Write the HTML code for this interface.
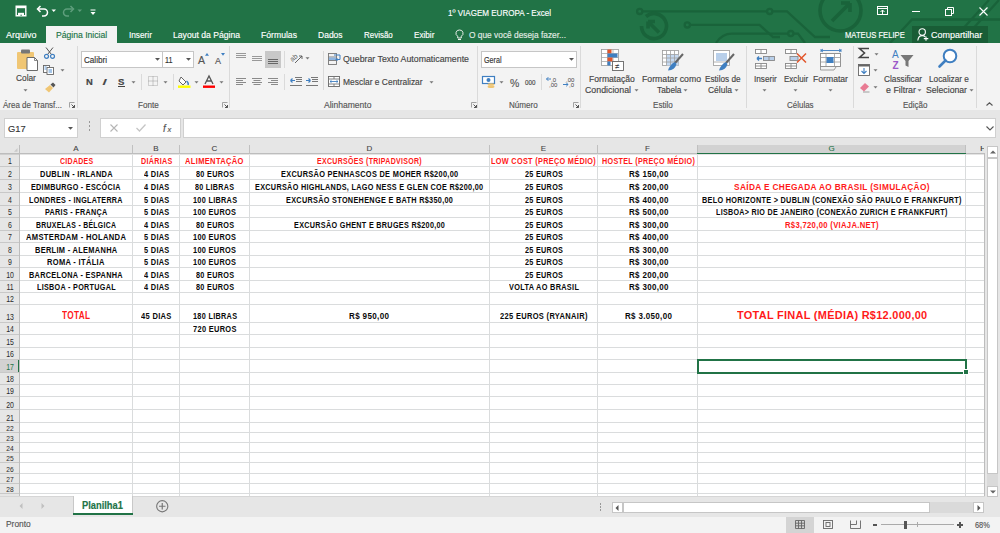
<!DOCTYPE html><html><head><meta charset="utf-8"><style>
*{margin:0;padding:0;box-sizing:border-box}
html,body{width:1000px;height:533px;overflow:hidden;background:#e6e6e6;font-family:"Liberation Sans",sans-serif;position:relative}
.a{position:absolute}
svg.a{overflow:visible}
.tx{position:absolute;white-space:nowrap;line-height:1;-webkit-text-stroke:0.15px currentColor}
</style></head><body><div class="a" style="left:0px;top:0px;width:1000px;height:43px;background:#217346;"></div>
<svg class="a" style="left:0px;top:0px;" width="1000" height="43" viewBox="0 0 1000 43">
<g fill="none" stroke="#19633a" stroke-width="2.3">
<circle cx="639.7" cy="11.4" r="2.6"/>
<path d="M642.3 11.4 H767.1"/>
<circle cx="769.7" cy="11.4" r="2.6"/>
<path d="M772.3 11.4 H787 L815 37 H830"/>
<circle cx="687.3" cy="24.9" r="2.6"/>
<path d="M689.9 24.9 H759.5 L773 37 H780"/>
<path d="M716 43 Q722 33.6 732 33.6 H788.2"/>
<circle cx="790.8" cy="33.6" r="2.6"/>
<path d="M793.4 33.6 H798 L805 43"/>
<path d="M890 43 L912 19.5 H1000"/>
<path d="M950 43 L989 0"/>
<path d="M960 43 L999 0"/>
</g>
<g fill="none" stroke="#19633a" stroke-width="3.6">
<path d="M646 16.5 A12.5 12.5 0 1 1 641.5 26"/>
<path d="M659 32.5 L648 21.5 M648 21.5 H655 M648 21.5 V28.5"/>
<path d="M826 -4 A20.5 20.5 0 1 0 855 -4"/>
<path d="M832 21 L850 3 M850 3 H841 M850 3 V12"/>
</g></svg>
<svg class="a" style="left:15px;top:5px;" width="12" height="12" viewBox="0 0 12 12"><path d="M1.2 1.2 H10.8 V10.8 H1.2 Z" fill="none" stroke="#ffffff" stroke-width="1.4"/><rect x="1" y="1" width="10" height="2.2" fill="#ffffff"/><path d="M3 11 V7.8 H9 V11" fill="#ffffff"/><rect x="5.6" y="9.6" width="1" height="1.4" fill="#217346"/></svg>
<svg class="a" style="left:36px;top:5px;" width="13" height="12" viewBox="0 0 13 12"><path d="M2 4 H8 A3.5 3.5 0 0 1 8 11 H6" fill="none" stroke="#ffffff" stroke-width="1.5"/><path d="M4.5 1 L1.5 4 L4.5 7" fill="none" stroke="#ffffff" stroke-width="1.5"/></svg>
<svg class="a" style="left:51px;top:9px;" width="6" height="4" viewBox="0 0 6 4"><path d="M0.5 0.5 H5 L2.75 3 Z" fill="#ffffff"/></svg>
<svg class="a" style="left:62px;top:5px;" width="13" height="12" viewBox="0 0 13 12"><path d="M11 4 H5 A3.5 3.5 0 0 0 5 11 H7" fill="none" stroke="#5e9e7c" stroke-width="1.5"/><path d="M8.5 1 L11.5 4 L8.5 7" fill="none" stroke="#5e9e7c" stroke-width="1.5"/></svg>
<svg class="a" style="left:77px;top:9px;" width="6" height="4" viewBox="0 0 6 4"><path d="M0.5 0.5 H5 L2.75 3 Z" fill="#5e9e7c"/></svg>
<svg class="a" style="left:90px;top:9px;" width="6" height="7" viewBox="0 0 6 7"><rect x="0.5" y="0.5" width="5" height="1" fill="#ffffff"/><path d="M0.5 3 H5.5 L3 6 Z" fill="#ffffff"/></svg>
<div id="t1" class="tx" style="left:447.5px;top:8.51px;font-size:9.2px;color:#ffffff;font-weight:normal;transform:scaleX(0.8761);transform-origin:0 0;">1º VIAGEM EUROPA - Excel</div>
<svg class="a" style="left:877px;top:6px;" width="11" height="10" viewBox="0 0 11 10"><rect x="0.5" y="0.5" width="10" height="8" fill="none" stroke="#ffffff" stroke-width="1"/><path d="M0.5 2.5 H10.5" stroke="#ffffff"/><path d="M5.5 8 V4 M3.5 6 L5.5 4 L7.5 6" fill="none" stroke="#ffffff" stroke-width="1"/></svg>
<div class="a" style="left:912px;top:11px;width:8px;height:1px;background:#ffffff;"></div>
<svg class="a" style="left:945px;top:7px;" width="9" height="9" viewBox="0 0 9 9"><rect x="0.5" y="2.5" width="6" height="6" fill="none" stroke="#ffffff"/><path d="M2.5 2.5 V0.5 H8.5 V6.5 H6.5" fill="none" stroke="#ffffff"/></svg>
<svg class="a" style="left:979px;top:7px;" width="9" height="9" viewBox="0 0 9 9"><path d="M0.5 0.5 L8.5 8.5 M8.5 0.5 L0.5 8.5" stroke="#ffffff" stroke-width="1.1"/></svg>
<div class="a" style="left:46px;top:26px;width:71px;height:17px;background:#f3f3f3;"></div>
<div id="t2" class="tx" style="left:6.0px;top:30.68px;font-size:9px;color:#ffffff;font-weight:normal;transform:scaleX(0.9995);transform-origin:0 0;">Arquivo</div>
<div id="t3" class="tx" style="left:55.7px;top:30.68px;font-size:9px;color:#217346;font-weight:normal;transform:scaleX(0.9562);transform-origin:0 0;">Página Inicial</div>
<div id="t4" class="tx" style="left:128.8px;top:30.68px;font-size:9px;color:#ffffff;font-weight:normal;transform:scaleX(0.9154);transform-origin:0 0;">Inserir</div>
<div id="t5" class="tx" style="left:172.5px;top:30.68px;font-size:9px;color:#ffffff;font-weight:normal;transform:scaleX(0.9563);transform-origin:0 0;">Layout da Página</div>
<div id="t6" class="tx" style="left:260.5px;top:30.68px;font-size:9px;color:#ffffff;font-weight:normal;transform:scaleX(0.9596);transform-origin:0 0;">Fórmulas</div>
<div id="t7" class="tx" style="left:317.6px;top:30.68px;font-size:9px;color:#ffffff;font-weight:normal;transform:scaleX(0.9456);transform-origin:0 0;">Dados</div>
<div id="t8" class="tx" style="left:363.8px;top:30.68px;font-size:9px;color:#ffffff;font-weight:normal;transform:scaleX(0.8857);transform-origin:0 0;">Revisão</div>
<div id="t9" class="tx" style="left:414.3px;top:30.68px;font-size:9px;color:#ffffff;font-weight:normal;transform:scaleX(0.9060);transform-origin:0 0;">Exibir</div>
<svg class="a" style="left:455px;top:29px;" width="9" height="12" viewBox="0 0 9 12"><path d="M4.5 1 A3.3 3.3 0 0 1 6.3 7.2 V9 H2.7 V7.2 A3.3 3.3 0 0 1 4.5 1 Z" fill="none" stroke="#e8f0ea" stroke-width="1"/><path d="M3 10.5 H6" stroke="#e8f0ea"/></svg>
<div id="t10" class="tx" style="left:468.5px;top:30.68px;font-size:9px;color:#e1ece5;font-weight:normal;transform:scaleX(0.9275);transform-origin:0 0;">O que você deseja fazer...</div>
<div id="t11" class="tx" style="left:844.8px;top:30.68px;font-size:9px;color:#ffffff;font-weight:normal;transform:scaleX(0.8499);transform-origin:0 0;">MATEUS FELIPE</div>
<div class="a" style="left:912px;top:26px;width:76px;height:17px;background:#195d36;"></div>
<svg class="a" style="left:917px;top:28px;" width="12" height="13" viewBox="0 0 12 13"><circle cx="5.2" cy="4" r="3.2" fill="none" stroke="#ffffff" stroke-width="1.1"/><path d="M0.8 12.5 C1.2 9.2 3 7.6 5.2 7.6 C6.5 7.6 7.6 8 8.3 8.8" fill="none" stroke="#ffffff" stroke-width="1.1"/><path d="M9 8.5 V12.8 M6.8 10.6 H11.3" stroke="#ffffff" stroke-width="1.1"/></svg>
<div id="t12" class="tx" style="left:931.0px;top:30.68px;font-size:9px;color:#ffffff;font-weight:normal;transform:scaleX(0.9955);transform-origin:0 0;">Compartilhar</div>
<div class="a" style="left:0px;top:43px;width:1000px;height:67px;background:#f3f3f3;"></div>
<div class="a" style="left:77px;top:46px;width:1px;height:62px;background:#dadada;"></div>
<div class="a" style="left:229px;top:46px;width:1px;height:62px;background:#dadada;"></div>
<div class="a" style="left:477px;top:46px;width:1px;height:62px;background:#dadada;"></div>
<div class="a" style="left:580px;top:46px;width:1px;height:62px;background:#dadada;"></div>
<div class="a" style="left:746px;top:46px;width:1px;height:62px;background:#dadada;"></div>
<div class="a" style="left:853px;top:46px;width:1px;height:62px;background:#dadada;"></div>
<div class="a" style="left:976px;top:46px;width:1px;height:62px;background:#dadada;"></div>
<svg class="a" style="left:16px;top:49px;" width="22" height="22" viewBox="0 0 22 22"><rect x="1" y="3" width="17" height="17" rx="1" fill="#f0c674"/><rect x="5" y="0.5" width="9" height="4" rx="1" fill="#777"/>
<path d="M11 8.5 H18.5 L21.5 11.5 V21.5 H11 Z" fill="#fff" stroke="#6b6b6b" stroke-width="1"/><path d="M18.5 8.5 V11.5 H21.5" fill="none" stroke="#6b6b6b" stroke-width="0.8"/></svg>
<div id="t13" class="tx" style="left:15.8px;top:74.35px;font-size:8.8px;color:#444;font-weight:normal;transform:scaleX(0.9462);transform-origin:0 0;">Colar</div>
<svg class="a" style="left:23px;top:89px;" width="5" height="3" viewBox="0 0 5 3"><path d="M0.5 0.3 H4.5 L2.5 2.6 Z" fill="#777"/></svg>
<svg class="a" style="left:44px;top:47px;" width="11" height="12" viewBox="0 0 11 12"><path d="M2 0.5 L7.5 7.5 M9 0.5 L3.5 7.5" stroke="#555" stroke-width="1"/><circle cx="2.5" cy="9.3" r="2" fill="none" stroke="#3f7fc1" stroke-width="1.2"/><circle cx="8.5" cy="9.3" r="2" fill="none" stroke="#3f7fc1" stroke-width="1.2"/></svg>
<svg class="a" style="left:43px;top:65px;" width="11" height="10" viewBox="0 0 11 10"><rect x="0.5" y="0.5" width="6" height="7" fill="#fff" stroke="#666" stroke-width="0.9"/><rect x="4" y="2.5" width="6.5" height="7" fill="#fff" stroke="#666" stroke-width="0.9"/><path d="M5.5 5 H9 M5.5 7 H9" stroke="#4a8bd0" stroke-width="1"/><path d="M1.5 2 h2 M1.5 4 h2" stroke="#4a8bd0" stroke-width="0.9"/></svg>
<svg class="a" style="left:60px;top:69px;" width="5" height="3" viewBox="0 0 5 3"><path d="M0.5 0.3 H4.5 L2.5 2.6 Z" fill="#777"/></svg>
<svg class="a" style="left:44px;top:82px;" width="12" height="11" viewBox="0 0 12 11"><path d="M1 7 L6 3 L9 6 L5 10.5 Z" fill="#f0c674"/><path d="M6.5 2.5 L9 0.5 L11.5 3 L9.5 5.5 Z" fill="#555"/></svg>
<div id="t14" class="tx" style="left:2.9px;top:100.92px;font-size:8.6px;color:#555;font-weight:normal;transform:scaleX(0.9271);transform-origin:0 0;">Área de Transf...</div>
<svg class="a" style="left:69px;top:102px;" width="6" height="6" viewBox="0 0 6 6"><path d="M0.5 5.5 V0.5 H5.5" fill="none" stroke="#999" stroke-width="0.9"/><path d="M2.5 2.5 L5.5 5.5 M3 5.5 H5.5 V3" fill="none" stroke="#555" stroke-width="1"/></svg>
<div class="a" style="left:81px;top:51px;width:82px;height:17px;background:#fff;border:1px solid #c6c6c6"></div>
<div class="a" style="left:162px;top:51px;width:32px;height:17px;background:#fff;border:1px solid #c6c6c6"></div>
<div id="t15" class="tx" style="left:83.7px;top:55.85px;font-size:8.8px;color:#333;font-weight:normal;transform:scaleX(0.9223);transform-origin:0 0;">Calibri</div>
<div id="t16" class="tx" style="left:164.8px;top:55.85px;font-size:8.8px;color:#333;font-weight:normal;transform:scaleX(0.8205);transform-origin:0 0;">11</div>
<svg class="a" style="left:155px;top:58px;" width="5" height="3" viewBox="0 0 5 3"><path d="M0 0 H5 L2.5 2.8 Z" fill="#555"/></svg>
<svg class="a" style="left:186px;top:58px;" width="5" height="3" viewBox="0 0 5 3"><path d="M0 0 H5 L2.5 2.8 Z" fill="#555"/></svg>
<div id="t17" class="tx" style="left:198.4px;top:55.83px;font-size:10px;color:#555;font-weight:normal;transform:scaleX(1.0492);transform-origin:0 0;">A</div>
<svg class="a" style="left:205px;top:53px;" width="4" height="3" viewBox="0 0 4 3"><path d="M0 2.8 H4 L2 0 Z" fill="#3f7fc1"/></svg>
<div id="t18" class="tx" style="left:215.0px;top:57.10px;font-size:8.5px;color:#555;font-weight:normal;transform:scaleX(1.0579);transform-origin:0 0;">A</div>
<svg class="a" style="left:220.5px;top:53px;" width="4" height="3" viewBox="0 0 4 3"><path d="M0 0 H4 L2 2.8 Z" fill="#3f7fc1"/></svg>
<div id="t19" class="tx" style="left:86.0px;top:77.15px;font-size:9.5px;color:#444;font-weight:bold;transform:scaleX(0.9891);transform-origin:0 0;">N</div>
<div id="t20" class="tx" style="left:102.0px;top:77.15px;font-size:9.5px;color:#444;font-weight:normal;transform:scaleX(1.8935);transform-origin:0 0;font-style:italic;font-family:"Liberation Serif",serif;">I</div>
<div id="t21" class="tx" style="left:118.4px;top:77.15px;font-size:9.5px;color:#444;font-weight:bold;transform:scaleX(1.0089);transform-origin:0 0;">S</div>
<div class="a" style="left:118px;top:86px;width:7px;height:1px;background:#444;"></div>
<svg class="a" style="left:131px;top:81px;" width="5" height="3" viewBox="0 0 5 3"><path d="M0.5 0.3 H4.5 L2.5 2.6 Z" fill="#777"/></svg>
<svg class="a" style="left:163px;top:81px;" width="5" height="3" viewBox="0 0 5 3"><path d="M0.5 0.3 H4.5 L2.5 2.6 Z" fill="#777"/></svg>
<svg class="a" style="left:194px;top:81px;" width="5" height="3" viewBox="0 0 5 3"><path d="M0.5 0.3 H4.5 L2.5 2.6 Z" fill="#777"/></svg>
<svg class="a" style="left:219px;top:81px;" width="5" height="3" viewBox="0 0 5 3"><path d="M0.5 0.3 H4.5 L2.5 2.6 Z" fill="#777"/></svg>
<div class="a" style="left:141px;top:74px;width:1px;height:16px;background:#dadada;"></div>
<div class="a" style="left:173px;top:74px;width:1px;height:16px;background:#dadada;"></div>
<svg class="a" style="left:148px;top:76px;" width="10" height="10" viewBox="0 0 10 10"><rect x="0.5" y="0.5" width="9" height="9" fill="none" stroke="#aaa" stroke-width="1" stroke-dasharray="1 1"/><path d="M5 0.5 V9.5 M0.5 5 H9.5" stroke="#999" stroke-width="1" stroke-dasharray="1 1"/></svg>
<svg class="a" style="left:178px;top:75px;" width="13" height="13" viewBox="0 0 13 13"><path d="M3 2 L8 7 L5 10 L1 6 Z" fill="#fff" stroke="#555" stroke-width="0.9"/><path d="M8.5 6 Q11 8 10 10" fill="none" stroke="#3f7fc1" stroke-width="1.5"/><rect x="0" y="10.5" width="12.5" height="2.4" fill="#ffff00"/></svg>
<svg class="a" style="left:203px;top:75px;" width="12" height="13" viewBox="0 0 12 13"><path d="M2 9 L6 1 L10 9 M3.6 6 H8.4" fill="none" stroke="#555" stroke-width="1.3"/><rect x="0" y="10.5" width="12" height="2.4" fill="#ff0000"/></svg>
<div id="t22" class="tx" style="left:137.6px;top:100.92px;font-size:8.6px;color:#555;font-weight:normal;transform:scaleX(0.9461);transform-origin:0 0;">Fonte</div>
<svg class="a" style="left:222px;top:102px;" width="6" height="6" viewBox="0 0 6 6"><path d="M0.5 5.5 V0.5 H5.5" fill="none" stroke="#999" stroke-width="0.9"/><path d="M2.5 2.5 L5.5 5.5 M3 5.5 H5.5 V3" fill="none" stroke="#555" stroke-width="1"/></svg>
<svg class="a" style="left:236px;top:53px;" width="10" height="6" viewBox="0 0 10 6"><path d="M0 0.5 H10 M0 2.5 H10 M0 4.5 H10" stroke="#999" stroke-width="1"/></svg>
<svg class="a" style="left:252px;top:56px;" width="10" height="6" viewBox="0 0 10 6"><path d="M0 0.5 H10 M0 2.5 H10 M0 4.5 H10" stroke="#999" stroke-width="1"/></svg>
<div class="a" style="left:265px;top:51px;width:16px;height:17px;background:#c8c8c8;"></div>
<svg class="a" style="left:268px;top:59px;" width="10" height="6" viewBox="0 0 10 6"><path d="M0 0.5 H10 M0 2.5 H10 M0 4.5 H10" stroke="#666" stroke-width="1"/></svg>
<div class="a" style="left:284px;top:51px;width:1px;height:17px;background:#dadada;"></div>
<svg class="a" style="left:290px;top:53px;" width="13" height="11" viewBox="0 0 13 11"><text x="0" y="7" font-size="7" font-family="Liberation Sans" fill="#555" transform="rotate(-40 4 5)">ab</text><path d="M5 10 L12 3 M12 3 h-3 M12 3 v3" fill="none" stroke="#555" stroke-width="0.9"/></svg>
<svg class="a" style="left:305px;top:57px;" width="5" height="3" viewBox="0 0 5 3"><path d="M0.5 0.3 H4.5 L2.5 2.6 Z" fill="#777"/></svg>
<svg class="a" style="left:236px;top:78px;" width="10" height="8" viewBox="0 0 10 8"><path d="M0 0.5 H10 M0 2.5 H7 M0 4.5 H10 M0 6.5 H7" stroke="#8a8a8a" stroke-width="1"/></svg>
<svg class="a" style="left:252px;top:78px;" width="10" height="8" viewBox="0 0 10 8"><path d="M0 0.5 H10 M1.5 2.5 H8.5 M0 4.5 H10 M1.5 6.5 H8.5" stroke="#8a8a8a" stroke-width="1"/></svg>
<svg class="a" style="left:268px;top:78px;" width="10" height="8" viewBox="0 0 10 8"><path d="M0 0.5 H10 M3 2.5 H10 M0 4.5 H10 M3 6.5 H10" stroke="#8a8a8a" stroke-width="1"/></svg>
<div class="a" style="left:284px;top:74px;width:1px;height:16px;background:#dadada;"></div>
<svg class="a" style="left:290px;top:77px;" width="12" height="10" viewBox="0 0 12 10"><path d="M5 0.5 H12 M6 2.5 H12 M6 4.5 H12 M0 8.5 H12" stroke="#777" stroke-width="1"/><path d="M0.5 3.5 H5 M0.5 3.5 L2.5 1.5 M0.5 3.5 L2.5 5.5" fill="none" stroke="#3f7fc1" stroke-width="1.2"/></svg>
<svg class="a" style="left:306px;top:77px;" width="12" height="10" viewBox="0 0 12 10"><path d="M5 0.5 H12 M6 2.5 H12 M6 4.5 H12 M0 8.5 H12" stroke="#777" stroke-width="1"/><path d="M0 3.5 H4.5 M4.5 3.5 L2.5 1.5 M4.5 3.5 L2.5 5.5" fill="none" stroke="#3f7fc1" stroke-width="1.2"/></svg>
<div class="a" style="left:323px;top:51px;width:1px;height:39px;background:#dadada;"></div>
<svg class="a" style="left:328px;top:53px;" width="13" height="12" viewBox="0 0 13 12"><rect x="0.5" y="0.5" width="8" height="11" fill="none" stroke="#777" stroke-width="0.9"/><path d="M0.5 4 H8.5 M0.5 7.5 H8.5" stroke="#777" stroke-width="0.9"/><rect x="1" y="4.5" width="7" height="2.5" fill="#8fb5e0"/><path d="M6 2 H12 V6.5 H8 M8 6.5 L9.5 5 M8 6.5 L9.5 8" fill="none" stroke="#3f7fc1" stroke-width="1"/></svg>
<div id="t23" class="tx" style="left:342.8px;top:55.02px;font-size:9.3px;color:#444;font-weight:normal;transform:scaleX(0.9461);transform-origin:0 0;">Quebrar Texto Automaticamente</div>
<svg class="a" style="left:328px;top:76px;" width="12" height="11" viewBox="0 0 12 11"><rect x="0.5" y="0.5" width="11" height="10" fill="#fff" stroke="#666" stroke-width="0.9"/><path d="M0.5 3 H11.5 M0.5 8 H11.5 M6 0.5 V3 M6 8 V10.5" stroke="#777" stroke-width="0.9"/><path d="M2 5.5 H10 M2 5.5 L3.5 4.3 M2 5.5 L3.5 6.7 M10 5.5 L8.5 4.3 M10 5.5 L8.5 6.7" fill="none" stroke="#3f7fc1" stroke-width="0.9"/></svg>
<div id="t24" class="tx" style="left:342.8px;top:77.72px;font-size:9.3px;color:#444;font-weight:normal;transform:scaleX(0.9062);transform-origin:0 0;">Mesclar e Centralizar</div>
<svg class="a" style="left:429px;top:81px;" width="5" height="3" viewBox="0 0 5 3"><path d="M0.5 0.3 H4.5 L2.5 2.6 Z" fill="#777"/></svg>
<div id="t25" class="tx" style="left:323.9px;top:100.92px;font-size:8.6px;color:#555;font-weight:normal;transform:scaleX(0.9920);transform-origin:0 0;">Alinhamento</div>
<svg class="a" style="left:471px;top:102px;" width="6" height="6" viewBox="0 0 6 6"><path d="M0.5 5.5 V0.5 H5.5" fill="none" stroke="#999" stroke-width="0.9"/><path d="M2.5 2.5 L5.5 5.5 M3 5.5 H5.5 V3" fill="none" stroke="#555" stroke-width="1"/></svg>
<div class="a" style="left:481px;top:51px;width:96px;height:17px;background:#fff;border:1px solid #c6c6c6"></div>
<div id="t26" class="tx" style="left:483.7px;top:55.85px;font-size:8.8px;color:#333;font-weight:normal;transform:scaleX(0.8134);transform-origin:0 0;">Geral</div>
<svg class="a" style="left:569px;top:58px;" width="5" height="3" viewBox="0 0 5 3"><path d="M0 0 H5 L2.5 2.8 Z" fill="#555"/></svg>
<svg class="a" style="left:482px;top:76px;" width="14" height="12" viewBox="0 0 14 12"><rect x="0.5" y="0.5" width="12" height="7" fill="#fff" stroke="#3f7fc1" stroke-width="1.2"/><circle cx="6.5" cy="4" r="2" fill="#3f7fc1"/><ellipse cx="9" cy="8.5" rx="3.5" ry="1.3" fill="#f0c674"/><ellipse cx="9" cy="10.8" rx="3.5" ry="1.3" fill="#f0c674"/></svg>
<svg class="a" style="left:499px;top:81px;" width="5" height="3" viewBox="0 0 5 3"><path d="M0.5 0.3 H4.5 L2.5 2.6 Z" fill="#777"/></svg>
<div id="t27" class="tx" style="left:509.6px;top:77.68px;font-size:11px;color:#555;font-weight:normal;transform:scaleX(0.9508);transform-origin:0 0;">%</div>
<div id="t28" class="tx" style="left:524.8px;top:79.40px;font-size:7.2px;color:#444;font-weight:normal;transform:scaleX(0.8667);transform-origin:0 0;">000</div>
<div class="a" style="left:541px;top:74px;width:1px;height:16px;background:#dadada;"></div>
<svg class="a" style="left:546px;top:76px;" width="12" height="12" viewBox="0 0 12 12"><text x="5" y="5.5" font-size="6" font-family="Liberation Sans" fill="#444">,0</text><text x="3" y="11" font-size="6" font-family="Liberation Sans" fill="#444">,00</text><path d="M0.5 3 H5 M0.5 3 L2.3 1.2 M0.5 3 L2.3 4.8" fill="none" stroke="#3f7fc1" stroke-width="1"/></svg>
<svg class="a" style="left:563px;top:76px;" width="12" height="12" viewBox="0 0 12 12"><text x="3" y="5.5" font-size="6" font-family="Liberation Sans" fill="#444">,00</text><text x="6" y="11" font-size="6" font-family="Liberation Sans" fill="#444">,0</text><path d="M0 8.5 H5 M5 8.5 L3.2 6.7 M5 8.5 L3.2 10.3" fill="none" stroke="#3f7fc1" stroke-width="1"/></svg>
<div id="t29" class="tx" style="left:508.8px;top:100.92px;font-size:8.6px;color:#555;font-weight:normal;transform:scaleX(0.9418);transform-origin:0 0;">Número</div>
<svg class="a" style="left:572.5px;top:102px;" width="6" height="6" viewBox="0 0 6 6"><path d="M0.5 5.5 V0.5 H5.5" fill="none" stroke="#999" stroke-width="0.9"/><path d="M2.5 2.5 L5.5 5.5 M3 5.5 H5.5 V3" fill="none" stroke="#555" stroke-width="1"/></svg>
<svg class="a" style="left:601px;top:49px;" width="23" height="22" viewBox="0 0 23 22"><g stroke="#999" stroke-width="0.8" fill="#fff"><rect x="0.5" y="0.5" width="17" height="16"/></g>
<path d="M6.5 0.5 V16.5 M12 0.5 V16.5 M0.5 4.5 H17.5 M0.5 8.5 H17.5 M0.5 12.5 H17.5" stroke="#aaa" stroke-width="0.8"/>
<rect x="6.5" y="0.5" width="4" height="4" fill="#e2562b"/><rect x="6.5" y="4.5" width="10" height="4" fill="#3f7fc1"/><rect x="6.5" y="8.5" width="5" height="4" fill="#e2562b"/><rect x="6.5" y="12.5" width="3" height="4" fill="#3f7fc1"/>
<rect x="11.5" y="12.5" width="11" height="9" fill="#fff" stroke="#666" stroke-width="0.9"/><text x="14" y="20" font-size="8" font-family="Liberation Sans" fill="#333">≠</text></svg>
<div id="t30" class="tx" style="left:588.6px;top:74.85px;font-size:8.8px;color:#444;font-weight:normal;transform:scaleX(0.9758);transform-origin:0 0;">Formatação</div>
<div id="t31" class="tx" style="left:585.4px;top:86.15px;font-size:8.8px;color:#444;font-weight:normal;transform:scaleX(1.0003);transform-origin:0 0;">Condicional</div>
<svg class="a" style="left:634px;top:89px;" width="5" height="3" viewBox="0 0 5 3"><path d="M0.5 0.3 H4.5 L2.5 2.6 Z" fill="#777"/></svg>
<svg class="a" style="left:662px;top:50px;" width="22" height="21" viewBox="0 0 22 21"><rect x="0.5" y="0.5" width="16" height="15" fill="#fff" stroke="#999" stroke-width="0.8"/>
<rect x="4.5" y="4.5" width="12" height="11" fill="#c5d9f1"/>
<path d="M4.5 0.5 V15.5 M8.5 0.5 V15.5 M12.5 0.5 V15.5 M0.5 4.5 H16.5 M0.5 8 H16.5 M0.5 12 H16.5" stroke="#a0a0a0" stroke-width="0.8"/>
<path d="M21 4 L13 13" stroke="#666" stroke-width="2"/><path d="M13 12 Q8 14 6 20.5 Q13 20 14.5 14 Z" fill="#3f7fc1"/></svg>
<div id="t32" class="tx" style="left:641.6px;top:74.85px;font-size:8.8px;color:#444;font-weight:normal;transform:scaleX(0.9893);transform-origin:0 0;">Formatar como</div>
<div id="t33" class="tx" style="left:656.5px;top:86.15px;font-size:8.8px;color:#444;font-weight:normal;transform:scaleX(0.9446);transform-origin:0 0;">Tabela</div>
<svg class="a" style="left:683px;top:89px;" width="5" height="3" viewBox="0 0 5 3"><path d="M0.5 0.3 H4.5 L2.5 2.6 Z" fill="#777"/></svg>
<svg class="a" style="left:713px;top:50px;" width="22" height="21" viewBox="0 0 22 21"><rect x="0.5" y="0.5" width="16" height="15" fill="#fff" stroke="#999" stroke-width="0.8"/>
<rect x="3" y="3" width="11" height="8" fill="#b8cfea"/><path d="M0.5 12 H16.5" stroke="#a0a0a0" stroke-width="0.8"/>
<path d="M21 4 L13 13" stroke="#666" stroke-width="2"/><path d="M13 12 Q8 14 6 20.5 Q13 20 14.5 14 Z" fill="#3f7fc1"/></svg>
<div id="t34" class="tx" style="left:705.0px;top:74.85px;font-size:8.8px;color:#444;font-weight:normal;transform:scaleX(0.9308);transform-origin:0 0;">Estilos de</div>
<div id="t35" class="tx" style="left:708.2px;top:86.15px;font-size:8.8px;color:#444;font-weight:normal;transform:scaleX(0.9618);transform-origin:0 0;">Célula</div>
<svg class="a" style="left:734px;top:89px;" width="5" height="3" viewBox="0 0 5 3"><path d="M0.5 0.3 H4.5 L2.5 2.6 Z" fill="#777"/></svg>
<div id="t36" class="tx" style="left:653.4px;top:100.92px;font-size:8.6px;color:#555;font-weight:normal;transform:scaleX(0.9422);transform-origin:0 0;">Estilo</div>
<svg class="a" style="left:755px;top:49px;" width="20" height="20" viewBox="0 0 20 20"><g fill="#fff" stroke="#888" stroke-width="0.9"><rect x="0.5" y="0.5" width="11" height="4"/><path d="M6 0.5 V4.5"/><rect x="0.5" y="14.5" width="11" height="5"/><path d="M6 14.5 V19.5 M0.5 17 H11.5"/></g>
<rect x="8.5" y="7.5" width="11" height="4" fill="#b8cfea" stroke="#888" stroke-width="0.9"/><path d="M14 7.5 V11.5" stroke="#888" stroke-width="0.9"/>
<path d="M2 9.5 H7 M2 9.5 L4 7.5 M2 9.5 L4 11.5" fill="none" stroke="#3f7fc1" stroke-width="1.4"/></svg>
<div id="t37" class="tx" style="left:753.7px;top:74.85px;font-size:8.8px;color:#444;font-weight:normal;transform:scaleX(0.9324);transform-origin:0 0;">Inserir</div>
<svg class="a" style="left:762px;top:89px;" width="5" height="3" viewBox="0 0 5 3"><path d="M0.5 0.3 H4.5 L2.5 2.6 Z" fill="#777"/></svg>
<svg class="a" style="left:785px;top:49px;" width="23" height="20" viewBox="0 0 23 20"><g fill="#fff" stroke="#888" stroke-width="0.9"><rect x="0.5" y="0.5" width="11" height="4"/><path d="M6 0.5 V4.5"/><rect x="0.5" y="14.5" width="11" height="5"/><path d="M6 14.5 V19.5 M0.5 17 H11.5"/></g>
<rect x="5" y="7.5" width="8" height="4" fill="#b8cfea" stroke="#888" stroke-width="0.9"/>
<path d="M12 4.5 L21 13.5 M21 4.5 L12 13.5" stroke="#e2562b" stroke-width="1.5"/></svg>
<div id="t38" class="tx" style="left:783.9px;top:74.85px;font-size:8.8px;color:#444;font-weight:normal;transform:scaleX(0.9127);transform-origin:0 0;">Excluir</div>
<svg class="a" style="left:793px;top:89px;" width="5" height="3" viewBox="0 0 5 3"><path d="M0.5 0.3 H4.5 L2.5 2.6 Z" fill="#777"/></svg>
<svg class="a" style="left:820px;top:48px;" width="22" height="23" viewBox="0 0 22 23"><path d="M1 1 V4 M21 1 V4 M1 2.5 H21 M1 2.5 L3 1 M1 2.5 L3 4 M21 2.5 L19 1 M21 2.5 L19 4" fill="none" stroke="#3f7fc1" stroke-width="0.9"/>
<rect x="0.5" y="5.5" width="20" height="13" fill="#fff" stroke="#888" stroke-width="0.9"/>
<path d="M6 5.5 V18.5 M14.5 5.5 V18.5 M0.5 9.5 H20.5 M0.5 14 H20.5" stroke="#999" stroke-width="0.8"/>
<rect x="6.5" y="9" width="7" height="6" fill="#3f7fc1"/><path d="M0.5 18.5 V22 H14 L16 19" fill="none" stroke="#888" stroke-width="0.8"/></svg>
<div id="t39" class="tx" style="left:813.0px;top:74.85px;font-size:8.8px;color:#444;font-weight:normal;transform:scaleX(0.9807);transform-origin:0 0;">Formatar</div>
<svg class="a" style="left:828px;top:89px;" width="5" height="3" viewBox="0 0 5 3"><path d="M0.5 0.3 H4.5 L2.5 2.6 Z" fill="#777"/></svg>
<div id="t40" class="tx" style="left:786.7px;top:100.92px;font-size:8.6px;color:#555;font-weight:normal;transform:scaleX(0.9277);transform-origin:0 0;">Células</div>
<svg class="a" style="left:858px;top:47px;" width="12" height="12" viewBox="0 0 12 12"><path d="M11 1.5 H1.5 L6.5 6 L1.5 10.5 H11" fill="none" stroke="#444" stroke-width="1.6"/></svg>
<svg class="a" style="left:874px;top:53px;" width="5" height="3" viewBox="0 0 5 3"><path d="M0.5 0.3 H4.5 L2.5 2.6 Z" fill="#777"/></svg>
<svg class="a" style="left:858px;top:64px;" width="12" height="12" viewBox="0 0 12 12"><rect x="0.5" y="0.5" width="11" height="11" fill="#fff" stroke="#666" stroke-width="0.9"/><rect x="0.5" y="0.5" width="11" height="2" fill="#666"/><path d="M6 4 V9.5 M3.5 7 L6 9.5 L8.5 7" fill="none" stroke="#3f7fc1" stroke-width="1.1"/></svg>
<svg class="a" style="left:873px;top:69px;" width="5" height="3" viewBox="0 0 5 3"><path d="M0.5 0.3 H4.5 L2.5 2.6 Z" fill="#777"/></svg>
<svg class="a" style="left:859px;top:82px;" width="11" height="10" viewBox="0 0 11 10"><path d="M1 6 L6 1 L10 4.5 L5 9.5 Z" fill="#e87b93"/><path d="M4 10 H10.5" stroke="#888" stroke-width="0.8"/></svg>
<svg class="a" style="left:873px;top:86px;" width="5" height="3" viewBox="0 0 5 3"><path d="M0.5 0.3 H4.5 L2.5 2.6 Z" fill="#777"/></svg>
<svg class="a" style="left:892px;top:49px;" width="23" height="21" viewBox="0 0 23 21"><text x="0" y="8.5" font-size="10" font-family="Liberation Sans" fill="#3f7fc1">A</text><text x="0.5" y="19.5" font-size="10" font-family="Liberation Sans" font-weight="bold" fill="#9b59c9">Z</text>
<path d="M8.5 6 H21.5 L16.5 12 V18 L13.5 16.5 V12 Z" fill="#777"/></svg>
<div id="t41" class="tx" style="left:883.8px;top:74.85px;font-size:8.8px;color:#444;font-weight:normal;transform:scaleX(0.9389);transform-origin:0 0;">Classificar</div>
<div id="t42" class="tx" style="left:885.9px;top:86.15px;font-size:8.8px;color:#444;font-weight:normal;transform:scaleX(1.0058);transform-origin:0 0;">e Filtrar</div>
<svg class="a" style="left:917px;top:89px;" width="5" height="3" viewBox="0 0 5 3"><path d="M0.5 0.3 H4.5 L2.5 2.6 Z" fill="#777"/></svg>
<svg class="a" style="left:938px;top:48px;" width="20" height="21" viewBox="0 0 20 21"><circle cx="12" cy="8" r="6.3" fill="#fff" stroke="#3f7fc1" stroke-width="2"/><path d="M7.5 12.5 L1.5 18.5" stroke="#3f7fc1" stroke-width="2.6" stroke-linecap="round"/></svg>
<div id="t43" class="tx" style="left:929.3px;top:74.85px;font-size:8.8px;color:#444;font-weight:normal;transform:scaleX(0.9378);transform-origin:0 0;">Localizar e</div>
<div id="t44" class="tx" style="left:926.1px;top:86.15px;font-size:8.8px;color:#444;font-weight:normal;transform:scaleX(0.9861);transform-origin:0 0;">Selecionar</div>
<svg class="a" style="left:969px;top:89px;" width="5" height="3" viewBox="0 0 5 3"><path d="M0.5 0.3 H4.5 L2.5 2.6 Z" fill="#777"/></svg>
<div id="t45" class="tx" style="left:902.7px;top:100.92px;font-size:8.6px;color:#555;font-weight:normal;transform:scaleX(0.9322);transform-origin:0 0;">Edição</div>
<svg class="a" style="left:986px;top:102px;" width="7" height="4" viewBox="0 0 7 4"><path d="M0.5 3.5 L3.5 0.8 L6.5 3.5" fill="none" stroke="#555" stroke-width="1.1"/></svg>
<div class="a" style="left:0px;top:110px;width:1000px;height:35px;background:#e6e6e6;"></div>
<div class="a" style="left:4px;top:118px;width:74px;height:20px;background:#fff;border:1px solid #d0d0d0"></div>
<div id="t46" class="tx" style="left:8.4px;top:123.87px;font-size:9.6px;color:#333;font-weight:normal;transform:scaleX(0.9702);transform-origin:0 0;">G17</div>
<svg class="a" style="left:68px;top:127px;" width="5" height="3" viewBox="0 0 5 3"><path d="M0 0 H5 L2.5 2.8 Z" fill="#555"/></svg>
<div class="a" style="left:89px;top:121px;width:1px;height:2px;background:#999;"></div>
<div class="a" style="left:89px;top:125px;width:1px;height:2px;background:#999;"></div>
<div class="a" style="left:89px;top:129px;width:1px;height:2px;background:#999;"></div>
<div class="a" style="left:100px;top:118px;width:81px;height:20px;background:#fff;border:1px solid #d0d0d0"></div>
<svg class="a" style="left:110px;top:124px;" width="8" height="8" viewBox="0 0 8 8"><path d="M0.5 0.5 L7.5 7.5 M7.5 0.5 L0.5 7.5" stroke="#b5b5b5" stroke-width="1.1"/></svg>
<svg class="a" style="left:136px;top:124px;" width="10" height="8" viewBox="0 0 10 8"><path d="M0.5 4 L3.5 7 L9.5 0.5" fill="none" stroke="#c5c5c5" stroke-width="1.3"/></svg>
<div id="t47" class="tx" style="left:163.0px;top:123.53px;font-size:10px;color:#555;font-weight:normal;transform:scaleX(1.0000);transform-origin:0 0;font-style:italic;font-family:"Liberation Serif",serif;">f</div>
<div id="t48" class="tx" style="left:167.5px;top:125.65px;font-size:7.5px;color:#555;font-weight:normal;transform:scaleX(1.0000);transform-origin:0 0;font-style:italic;font-family:"Liberation Serif",serif;">x</div>
<div class="a" style="left:183px;top:118px;width:813px;height:20px;background:#fff;border:1px solid #d0d0d0"></div>
<svg class="a" style="left:986px;top:126px;" width="8" height="5" viewBox="0 0 8 5"><path d="M0.5 0.5 L4 4 L7.5 0.5" fill="none" stroke="#555" stroke-width="1.1"/></svg>
<div class="a" style="left:20px;top:154px;width:964px;height:342px;background:#fff;"></div>
<div class="a" style="left:19px;top:166px;width:965px;height:1px;background:#dadcdd;"></div>
<div class="a" style="left:0px;top:166px;width:19px;height:1px;background:#c8c8c8;"></div>
<div class="a" style="left:19px;top:179px;width:965px;height:1px;background:#dadcdd;"></div>
<div class="a" style="left:0px;top:179px;width:19px;height:1px;background:#c8c8c8;"></div>
<div class="a" style="left:19px;top:192px;width:965px;height:1px;background:#dadcdd;"></div>
<div class="a" style="left:0px;top:192px;width:19px;height:1px;background:#c8c8c8;"></div>
<div class="a" style="left:19px;top:205px;width:965px;height:1px;background:#dadcdd;"></div>
<div class="a" style="left:0px;top:205px;width:19px;height:1px;background:#c8c8c8;"></div>
<div class="a" style="left:19px;top:217px;width:965px;height:1px;background:#dadcdd;"></div>
<div class="a" style="left:0px;top:217px;width:19px;height:1px;background:#c8c8c8;"></div>
<div class="a" style="left:19px;top:230px;width:965px;height:1px;background:#dadcdd;"></div>
<div class="a" style="left:0px;top:230px;width:19px;height:1px;background:#c8c8c8;"></div>
<div class="a" style="left:19px;top:242px;width:965px;height:1px;background:#dadcdd;"></div>
<div class="a" style="left:0px;top:242px;width:19px;height:1px;background:#c8c8c8;"></div>
<div class="a" style="left:19px;top:255px;width:965px;height:1px;background:#dadcdd;"></div>
<div class="a" style="left:0px;top:255px;width:19px;height:1px;background:#c8c8c8;"></div>
<div class="a" style="left:19px;top:267px;width:965px;height:1px;background:#dadcdd;"></div>
<div class="a" style="left:0px;top:267px;width:19px;height:1px;background:#c8c8c8;"></div>
<div class="a" style="left:19px;top:280px;width:965px;height:1px;background:#dadcdd;"></div>
<div class="a" style="left:0px;top:280px;width:19px;height:1px;background:#c8c8c8;"></div>
<div class="a" style="left:19px;top:292px;width:965px;height:1px;background:#dadcdd;"></div>
<div class="a" style="left:0px;top:292px;width:19px;height:1px;background:#c8c8c8;"></div>
<div class="a" style="left:19px;top:304px;width:965px;height:1px;background:#dadcdd;"></div>
<div class="a" style="left:0px;top:304px;width:19px;height:1px;background:#c8c8c8;"></div>
<div class="a" style="left:19px;top:322px;width:965px;height:1px;background:#dadcdd;"></div>
<div class="a" style="left:0px;top:322px;width:19px;height:1px;background:#c8c8c8;"></div>
<div class="a" style="left:19px;top:334px;width:965px;height:1px;background:#dadcdd;"></div>
<div class="a" style="left:0px;top:334px;width:19px;height:1px;background:#c8c8c8;"></div>
<div class="a" style="left:19px;top:347px;width:965px;height:1px;background:#dadcdd;"></div>
<div class="a" style="left:0px;top:347px;width:19px;height:1px;background:#c8c8c8;"></div>
<div class="a" style="left:19px;top:359px;width:965px;height:1px;background:#dadcdd;"></div>
<div class="a" style="left:0px;top:359px;width:19px;height:1px;background:#c8c8c8;"></div>
<div class="a" style="left:19px;top:372px;width:965px;height:1px;background:#dadcdd;"></div>
<div class="a" style="left:0px;top:372px;width:19px;height:1px;background:#c8c8c8;"></div>
<div class="a" style="left:19px;top:384px;width:965px;height:1px;background:#dadcdd;"></div>
<div class="a" style="left:0px;top:384px;width:19px;height:1px;background:#c8c8c8;"></div>
<div class="a" style="left:19px;top:396px;width:965px;height:1px;background:#dadcdd;"></div>
<div class="a" style="left:0px;top:396px;width:19px;height:1px;background:#c8c8c8;"></div>
<div class="a" style="left:19px;top:409px;width:965px;height:1px;background:#dadcdd;"></div>
<div class="a" style="left:0px;top:409px;width:19px;height:1px;background:#c8c8c8;"></div>
<div class="a" style="left:19px;top:422px;width:965px;height:1px;background:#dadcdd;"></div>
<div class="a" style="left:0px;top:422px;width:19px;height:1px;background:#c8c8c8;"></div>
<div class="a" style="left:19px;top:432px;width:965px;height:1px;background:#dadcdd;"></div>
<div class="a" style="left:0px;top:432px;width:19px;height:1px;background:#c8c8c8;"></div>
<div class="a" style="left:19px;top:442px;width:965px;height:1px;background:#dadcdd;"></div>
<div class="a" style="left:0px;top:442px;width:19px;height:1px;background:#c8c8c8;"></div>
<div class="a" style="left:19px;top:452px;width:965px;height:1px;background:#dadcdd;"></div>
<div class="a" style="left:0px;top:452px;width:19px;height:1px;background:#c8c8c8;"></div>
<div class="a" style="left:19px;top:462px;width:965px;height:1px;background:#dadcdd;"></div>
<div class="a" style="left:0px;top:462px;width:19px;height:1px;background:#c8c8c8;"></div>
<div class="a" style="left:19px;top:473px;width:965px;height:1px;background:#dadcdd;"></div>
<div class="a" style="left:0px;top:473px;width:19px;height:1px;background:#c8c8c8;"></div>
<div class="a" style="left:19px;top:483px;width:965px;height:1px;background:#dadcdd;"></div>
<div class="a" style="left:0px;top:483px;width:19px;height:1px;background:#c8c8c8;"></div>
<div class="a" style="left:19px;top:493px;width:965px;height:1px;background:#dadcdd;"></div>
<div class="a" style="left:0px;top:493px;width:19px;height:1px;background:#c8c8c8;"></div>
<div class="a" style="left:132px;top:153px;width:1px;height:343px;background:#dadcdd;"></div>
<div class="a" style="left:179px;top:153px;width:1px;height:343px;background:#dadcdd;"></div>
<div class="a" style="left:249px;top:153px;width:1px;height:343px;background:#dadcdd;"></div>
<div class="a" style="left:489px;top:153px;width:1px;height:343px;background:#dadcdd;"></div>
<div class="a" style="left:597px;top:153px;width:1px;height:343px;background:#dadcdd;"></div>
<div class="a" style="left:697px;top:153px;width:1px;height:343px;background:#dadcdd;"></div>
<div class="a" style="left:965px;top:153px;width:1px;height:343px;background:#dadcdd;"></div>
<div class="a" style="left:698px;top:145px;width:267px;height:8px;background:#d2d2d2;"></div>
<div class="a" style="left:0px;top:360px;width:19px;height:12px;background:#d2d2d2;"></div>
<div class="a" style="left:18px;top:360px;width:2px;height:12px;background:#217346;"></div>
<div class="a" style="left:132px;top:145px;width:1px;height:8px;background:#c0c0c0;"></div>
<div class="a" style="left:179px;top:145px;width:1px;height:8px;background:#c0c0c0;"></div>
<div class="a" style="left:249px;top:145px;width:1px;height:8px;background:#c0c0c0;"></div>
<div class="a" style="left:489px;top:145px;width:1px;height:8px;background:#c0c0c0;"></div>
<div class="a" style="left:597px;top:145px;width:1px;height:8px;background:#c0c0c0;"></div>
<div class="a" style="left:697px;top:145px;width:1px;height:8px;background:#c0c0c0;"></div>
<div class="a" style="left:965px;top:145px;width:1px;height:8px;background:#c0c0c0;"></div>
<div class="a" style="left:0px;top:153px;width:984px;height:1px;background:#bdbdbd;"></div>
<div class="a" style="left:0px;top:154px;width:19px;height:1px;background:#cfcfcf;"></div>
<div class="a" style="left:20px;top:154px;width:964px;height:1px;background:#e4e4e4;"></div>
<div class="a" style="left:19px;top:145px;width:1px;height:351px;background:#bdbdbd;"></div>
<div class="a" style="left:984px;top:153px;width:1px;height:343px;background:#bdbdbd;"></div>
<div class="a" style="left:697px;top:153px;width:269px;height:1px;background:#217346;"></div>
<div class="a" style="left:0px;top:496px;width:985px;height:1px;background:#d6d6d6;"></div>
<svg class="a" style="left:13.5px;top:148px;" width="4" height="4" viewBox="0 0 4 4"><path d="M3.5 0 V3.8 H0 Z" fill="#c8c8c8"/></svg>
<div class="a" style="left:966px;top:145px;width:18px;height:8px;overflow:hidden"><div class="tx" style="left:14.3px;top:-0.5px;font-size:8px;color:#333">H</div></div>
<div id="t49" class="tx" style="left:76.0px;top:145.02px;font-size:8px;color:#444;font-weight:normal;transform:translateX(-50%) scaleX(1.0000);transform-origin:50% 0;-webkit-text-stroke:0.1px currentColor;">A</div>
<div id="t50" class="tx" style="left:156.0px;top:145.02px;font-size:8px;color:#444;font-weight:normal;transform:translateX(-50%) scaleX(1.0000);transform-origin:50% 0;-webkit-text-stroke:0.1px currentColor;">B</div>
<div id="t51" class="tx" style="left:214.5px;top:145.02px;font-size:8px;color:#444;font-weight:normal;transform:translateX(-50%) scaleX(1.0000);transform-origin:50% 0;-webkit-text-stroke:0.1px currentColor;">C</div>
<div id="t52" class="tx" style="left:369.5px;top:145.02px;font-size:8px;color:#444;font-weight:normal;transform:translateX(-50%) scaleX(1.0000);transform-origin:50% 0;-webkit-text-stroke:0.1px currentColor;">D</div>
<div id="t53" class="tx" style="left:543.5px;top:145.02px;font-size:8px;color:#444;font-weight:normal;transform:translateX(-50%) scaleX(1.0000);transform-origin:50% 0;-webkit-text-stroke:0.1px currentColor;">E</div>
<div id="t54" class="tx" style="left:647.5px;top:145.02px;font-size:8px;color:#444;font-weight:normal;transform:translateX(-50%) scaleX(1.0000);transform-origin:50% 0;-webkit-text-stroke:0.1px currentColor;">F</div>
<div id="t55" class="tx" style="left:831.5px;top:145.02px;font-size:8px;color:#217346;font-weight:normal;transform:translateX(-50%) scaleX(1.0000);transform-origin:50% 0;-webkit-text-stroke:0.1px currentColor;">G</div>
<div id="t56" class="tx" style="left:10.0px;top:158.05px;font-size:8.2px;color:#2a2a2a;font-weight:normal;transform:translateX(-50%) scaleX(1.0000);transform-origin:50% 0;transform:translateX(-50%) scaleX(0.85);-webkit-text-stroke:0;">1</div>
<div id="t57" class="tx" style="left:10.0px;top:171.05px;font-size:8.2px;color:#2a2a2a;font-weight:normal;transform:translateX(-50%) scaleX(1.0000);transform-origin:50% 0;transform:translateX(-50%) scaleX(0.85);-webkit-text-stroke:0;">2</div>
<div id="t58" class="tx" style="left:10.0px;top:184.05px;font-size:8.2px;color:#2a2a2a;font-weight:normal;transform:translateX(-50%) scaleX(1.0000);transform-origin:50% 0;transform:translateX(-50%) scaleX(0.85);-webkit-text-stroke:0;">3</div>
<div id="t59" class="tx" style="left:10.0px;top:197.05px;font-size:8.2px;color:#2a2a2a;font-weight:normal;transform:translateX(-50%) scaleX(1.0000);transform-origin:50% 0;transform:translateX(-50%) scaleX(0.85);-webkit-text-stroke:0;">4</div>
<div id="t60" class="tx" style="left:10.0px;top:209.05px;font-size:8.2px;color:#2a2a2a;font-weight:normal;transform:translateX(-50%) scaleX(1.0000);transform-origin:50% 0;transform:translateX(-50%) scaleX(0.85);-webkit-text-stroke:0;">5</div>
<div id="t61" class="tx" style="left:10.0px;top:222.05px;font-size:8.2px;color:#2a2a2a;font-weight:normal;transform:translateX(-50%) scaleX(1.0000);transform-origin:50% 0;transform:translateX(-50%) scaleX(0.85);-webkit-text-stroke:0;">6</div>
<div id="t62" class="tx" style="left:10.0px;top:234.05px;font-size:8.2px;color:#2a2a2a;font-weight:normal;transform:translateX(-50%) scaleX(1.0000);transform-origin:50% 0;transform:translateX(-50%) scaleX(0.85);-webkit-text-stroke:0;">7</div>
<div id="t63" class="tx" style="left:10.0px;top:247.05px;font-size:8.2px;color:#2a2a2a;font-weight:normal;transform:translateX(-50%) scaleX(1.0000);transform-origin:50% 0;transform:translateX(-50%) scaleX(0.85);-webkit-text-stroke:0;">8</div>
<div id="t64" class="tx" style="left:10.0px;top:259.05px;font-size:8.2px;color:#2a2a2a;font-weight:normal;transform:translateX(-50%) scaleX(1.0000);transform-origin:50% 0;transform:translateX(-50%) scaleX(0.85);-webkit-text-stroke:0;">9</div>
<div id="t65" class="tx" style="left:10.0px;top:272.05px;font-size:8.2px;color:#2a2a2a;font-weight:normal;transform:translateX(-50%) scaleX(1.0000);transform-origin:50% 0;transform:translateX(-50%) scaleX(0.85);-webkit-text-stroke:0;">10</div>
<div id="t66" class="tx" style="left:10.0px;top:284.05px;font-size:8.2px;color:#2a2a2a;font-weight:normal;transform:translateX(-50%) scaleX(1.0000);transform-origin:50% 0;transform:translateX(-50%) scaleX(0.85);-webkit-text-stroke:0;">11</div>
<div id="t67" class="tx" style="left:10.0px;top:296.05px;font-size:8.2px;color:#2a2a2a;font-weight:normal;transform:translateX(-50%) scaleX(1.0000);transform-origin:50% 0;transform:translateX(-50%) scaleX(0.85);-webkit-text-stroke:0;">12</div>
<div id="t68" class="tx" style="left:10.0px;top:314.05px;font-size:8.2px;color:#2a2a2a;font-weight:normal;transform:translateX(-50%) scaleX(1.0000);transform-origin:50% 0;transform:translateX(-50%) scaleX(0.85);-webkit-text-stroke:0;">13</div>
<div id="t69" class="tx" style="left:10.0px;top:326.05px;font-size:8.2px;color:#2a2a2a;font-weight:normal;transform:translateX(-50%) scaleX(1.0000);transform-origin:50% 0;transform:translateX(-50%) scaleX(0.85);-webkit-text-stroke:0;">14</div>
<div id="t70" class="tx" style="left:10.0px;top:339.05px;font-size:8.2px;color:#2a2a2a;font-weight:normal;transform:translateX(-50%) scaleX(1.0000);transform-origin:50% 0;transform:translateX(-50%) scaleX(0.85);-webkit-text-stroke:0;">15</div>
<div id="t71" class="tx" style="left:10.0px;top:351.05px;font-size:8.2px;color:#2a2a2a;font-weight:normal;transform:translateX(-50%) scaleX(1.0000);transform-origin:50% 0;transform:translateX(-50%) scaleX(0.85);-webkit-text-stroke:0;">16</div>
<div id="t72" class="tx" style="left:10.0px;top:364.05px;font-size:8.2px;color:#217346;font-weight:normal;transform:translateX(-50%) scaleX(1.0000);transform-origin:50% 0;transform:translateX(-50%) scaleX(0.85);-webkit-text-stroke:0;">17</div>
<div id="t73" class="tx" style="left:10.0px;top:376.05px;font-size:8.2px;color:#2a2a2a;font-weight:normal;transform:translateX(-50%) scaleX(1.0000);transform-origin:50% 0;transform:translateX(-50%) scaleX(0.85);-webkit-text-stroke:0;">18</div>
<div id="t74" class="tx" style="left:10.0px;top:388.05px;font-size:8.2px;color:#2a2a2a;font-weight:normal;transform:translateX(-50%) scaleX(1.0000);transform-origin:50% 0;transform:translateX(-50%) scaleX(0.85);-webkit-text-stroke:0;">19</div>
<div id="t75" class="tx" style="left:10.0px;top:401.65px;font-size:8.2px;color:#2a2a2a;font-weight:normal;transform:translateX(-50%) scaleX(1.0000);transform-origin:50% 0;transform:translateX(-50%) scaleX(0.85);-webkit-text-stroke:0;">20</div>
<div id="t76" class="tx" style="left:10.0px;top:414.65px;font-size:8.2px;color:#2a2a2a;font-weight:normal;transform:translateX(-50%) scaleX(1.0000);transform-origin:50% 0;transform:translateX(-50%) scaleX(0.85);-webkit-text-stroke:0;">21</div>
<div id="t77" class="tx" style="left:10.0px;top:424.99px;font-size:7.8px;color:#2a2a2a;font-weight:normal;transform:translateX(-50%) scaleX(1.0000);transform-origin:50% 0;transform:translateX(-50%) scaleX(0.85);-webkit-text-stroke:0;">22</div>
<div id="t78" class="tx" style="left:10.0px;top:434.99px;font-size:7.8px;color:#2a2a2a;font-weight:normal;transform:translateX(-50%) scaleX(1.0000);transform-origin:50% 0;transform:translateX(-50%) scaleX(0.85);-webkit-text-stroke:0;">23</div>
<div id="t79" class="tx" style="left:10.0px;top:444.99px;font-size:7.8px;color:#2a2a2a;font-weight:normal;transform:translateX(-50%) scaleX(1.0000);transform-origin:50% 0;transform:translateX(-50%) scaleX(0.85);-webkit-text-stroke:0;">24</div>
<div id="t80" class="tx" style="left:10.0px;top:454.99px;font-size:7.8px;color:#2a2a2a;font-weight:normal;transform:translateX(-50%) scaleX(1.0000);transform-origin:50% 0;transform:translateX(-50%) scaleX(0.85);-webkit-text-stroke:0;">25</div>
<div id="t81" class="tx" style="left:10.0px;top:465.99px;font-size:7.8px;color:#2a2a2a;font-weight:normal;transform:translateX(-50%) scaleX(1.0000);transform-origin:50% 0;transform:translateX(-50%) scaleX(0.85);-webkit-text-stroke:0;">26</div>
<div id="t82" class="tx" style="left:10.0px;top:475.99px;font-size:7.8px;color:#2a2a2a;font-weight:normal;transform:translateX(-50%) scaleX(1.0000);transform-origin:50% 0;transform:translateX(-50%) scaleX(0.85);-webkit-text-stroke:0;">27</div>
<div id="t83" class="tx" style="left:10.0px;top:485.99px;font-size:7.8px;color:#2a2a2a;font-weight:normal;transform:translateX(-50%) scaleX(1.0000);transform-origin:50% 0;transform:translateX(-50%) scaleX(0.85);-webkit-text-stroke:0;">28</div>
<div id="t84" class="tx" style="left:59.5px;top:155.77px;font-size:9.6px;color:#ff1a1a;font-weight:bold;transform:scaleX(0.7285);transform-origin:0 0;-webkit-text-stroke:0;letter-spacing:0.4px;">CIDADES</div>
<div id="t85" class="tx" style="left:140.5px;top:155.77px;font-size:9.6px;color:#ff1a1a;font-weight:bold;transform:scaleX(0.7479);transform-origin:0 0;-webkit-text-stroke:0;letter-spacing:0.4px;">DIÁRIAS</div>
<div id="t86" class="tx" style="left:185.1px;top:155.77px;font-size:9.6px;color:#ff1a1a;font-weight:bold;transform:scaleX(0.7884);transform-origin:0 0;-webkit-text-stroke:0;letter-spacing:0.4px;">ALIMENTAÇÃO</div>
<div id="t87" class="tx" style="left:316.7px;top:155.77px;font-size:9.6px;color:#ff1a1a;font-weight:bold;transform:scaleX(0.7324);transform-origin:0 0;-webkit-text-stroke:0;letter-spacing:0.4px;">EXCURSÕES (TRIPADVISOR)</div>
<div id="t88" class="tx" style="left:491.1px;top:155.77px;font-size:9.6px;color:#ff1a1a;font-weight:bold;transform:scaleX(0.7628);transform-origin:0 0;-webkit-text-stroke:0;letter-spacing:0.4px;">LOW COST (PREÇO MÉDIO)</div>
<div id="t89" class="tx" style="left:601.6px;top:155.77px;font-size:9.6px;color:#ff1a1a;font-weight:bold;transform:scaleX(0.7506);transform-origin:0 0;-webkit-text-stroke:0;letter-spacing:0.4px;">HOSTEL (PREÇO MÉDIO)</div>
<div id="t90" class="tx" style="left:39.7px;top:168.77px;font-size:9.6px;color:#0a0a0a;font-weight:bold;transform:scaleX(0.7727);transform-origin:0 0;-webkit-text-stroke:0;letter-spacing:0.4px;">DUBLIN - IRLANDA</div>
<div id="t91" class="tx" style="left:143.6px;top:168.77px;font-size:9.6px;color:#0a0a0a;font-weight:bold;transform:scaleX(0.7681);transform-origin:0 0;-webkit-text-stroke:0;letter-spacing:0.4px;">4 DIAS</div>
<div id="t92" class="tx" style="left:195.8px;top:168.77px;font-size:9.6px;color:#0a0a0a;font-weight:bold;transform:scaleX(0.7561);transform-origin:0 0;-webkit-text-stroke:0;letter-spacing:0.4px;">80 EUROS</div>
<div id="t93" class="tx" style="left:280.7px;top:168.77px;font-size:9.6px;color:#0a0a0a;font-weight:bold;transform:scaleX(0.7689);transform-origin:0 0;-webkit-text-stroke:0;letter-spacing:0.4px;">EXCURSÃO PENHASCOS DE MOHER R$200,00</div>
<div id="t94" class="tx" style="left:524.7px;top:168.77px;font-size:9.6px;color:#0a0a0a;font-weight:bold;transform:scaleX(0.7541);transform-origin:0 0;-webkit-text-stroke:0;letter-spacing:0.4px;">25 EUROS</div>
<div id="t95" class="tx" style="left:628.7px;top:168.77px;font-size:9.6px;color:#0a0a0a;font-weight:bold;transform:scaleX(0.8334);transform-origin:0 0;-webkit-text-stroke:0;letter-spacing:0.4px;">R$ 150,00</div>
<div id="t96" class="tx" style="left:30.9px;top:181.77px;font-size:9.6px;color:#0a0a0a;font-weight:bold;transform:scaleX(0.7513);transform-origin:0 0;-webkit-text-stroke:0;letter-spacing:0.4px;">EDIMBURGO - ESCÓCIA</div>
<div id="t97" class="tx" style="left:144.2px;top:181.77px;font-size:9.6px;color:#0a0a0a;font-weight:bold;transform:scaleX(0.7681);transform-origin:0 0;-webkit-text-stroke:0;letter-spacing:0.4px;">4 DIAS</div>
<div id="t98" class="tx" style="left:194.8px;top:181.77px;font-size:9.6px;color:#0a0a0a;font-weight:bold;transform:scaleX(0.7464);transform-origin:0 0;-webkit-text-stroke:0;letter-spacing:0.4px;">80 LIBRAS</div>
<div id="t99" class="tx" style="left:255.2px;top:181.77px;font-size:9.6px;color:#0a0a0a;font-weight:bold;transform:scaleX(0.7573);transform-origin:0 0;-webkit-text-stroke:0;letter-spacing:0.4px;">EXCURSÃO HIGHLANDS, LAGO NESS E GLEN COE R$200,00</div>
<div id="t100" class="tx" style="left:524.7px;top:181.77px;font-size:9.6px;color:#0a0a0a;font-weight:bold;transform:scaleX(0.7541);transform-origin:0 0;-webkit-text-stroke:0;letter-spacing:0.4px;">25 EUROS</div>
<div id="t101" class="tx" style="left:628.7px;top:181.77px;font-size:9.6px;color:#0a0a0a;font-weight:bold;transform:scaleX(0.8334);transform-origin:0 0;-webkit-text-stroke:0;letter-spacing:0.4px;">R$ 200,00</div>
<div id="t102" class="tx" style="left:734.3px;top:181.60px;font-size:9.8px;color:#ff1a1a;font-weight:bold;transform:scaleX(0.8491);transform-origin:0 0;-webkit-text-stroke:0;letter-spacing:0.4px;">SAÍDA E CHEGADA AO BRASIL (SIMULAÇÃO)</div>
<div id="t103" class="tx" style="left:28.9px;top:194.77px;font-size:9.6px;color:#0a0a0a;font-weight:bold;transform:scaleX(0.7468);transform-origin:0 0;-webkit-text-stroke:0;letter-spacing:0.4px;">LONDRES - INGLATERRA</div>
<div id="t104" class="tx" style="left:143.6px;top:194.77px;font-size:9.6px;color:#0a0a0a;font-weight:bold;transform:scaleX(0.7681);transform-origin:0 0;-webkit-text-stroke:0;letter-spacing:0.4px;">5 DIAS</div>
<div id="t105" class="tx" style="left:192.8px;top:194.77px;font-size:9.6px;color:#0a0a0a;font-weight:bold;transform:scaleX(0.7587);transform-origin:0 0;-webkit-text-stroke:0;letter-spacing:0.4px;">100 LIBRAS</div>
<div id="t106" class="tx" style="left:286.0px;top:194.77px;font-size:9.6px;color:#0a0a0a;font-weight:bold;transform:scaleX(0.7601);transform-origin:0 0;-webkit-text-stroke:0;letter-spacing:0.4px;">EXCURSÃO STONEHENGE E BATH R$350,00</div>
<div id="t107" class="tx" style="left:524.7px;top:194.77px;font-size:9.6px;color:#0a0a0a;font-weight:bold;transform:scaleX(0.7541);transform-origin:0 0;-webkit-text-stroke:0;letter-spacing:0.4px;">25 EUROS</div>
<div id="t108" class="tx" style="left:628.7px;top:194.77px;font-size:9.6px;color:#0a0a0a;font-weight:bold;transform:scaleX(0.8334);transform-origin:0 0;-webkit-text-stroke:0;letter-spacing:0.4px;">R$ 400,00</div>
<div id="t109" class="tx" style="left:702.4px;top:194.77px;font-size:9.6px;color:#0a0a0a;font-weight:bold;transform:scaleX(0.7587);transform-origin:0 0;-webkit-text-stroke:0;letter-spacing:0.4px;">BELO HORIZONTE &gt; DUBLIN (CONEXÃO SÃO PAULO E FRANKFURT)</div>
<div id="t110" class="tx" style="left:44.8px;top:206.77px;font-size:9.6px;color:#0a0a0a;font-weight:bold;transform:scaleX(0.7520);transform-origin:0 0;-webkit-text-stroke:0;letter-spacing:0.4px;">PARIS - FRANÇA</div>
<div id="t111" class="tx" style="left:143.6px;top:206.77px;font-size:9.6px;color:#0a0a0a;font-weight:bold;transform:scaleX(0.7681);transform-origin:0 0;-webkit-text-stroke:0;letter-spacing:0.4px;">5 DIAS</div>
<div id="t112" class="tx" style="left:193.2px;top:206.77px;font-size:9.6px;color:#0a0a0a;font-weight:bold;transform:scaleX(0.7679);transform-origin:0 0;-webkit-text-stroke:0;letter-spacing:0.4px;">100 EUROS</div>
<div id="t113" class="tx" style="left:524.7px;top:206.77px;font-size:9.6px;color:#0a0a0a;font-weight:bold;transform:scaleX(0.7541);transform-origin:0 0;-webkit-text-stroke:0;letter-spacing:0.4px;">25 EUROS</div>
<div id="t114" class="tx" style="left:628.7px;top:206.77px;font-size:9.6px;color:#0a0a0a;font-weight:bold;transform:scaleX(0.8334);transform-origin:0 0;-webkit-text-stroke:0;letter-spacing:0.4px;">R$ 500,00</div>
<div id="t115" class="tx" style="left:716.3px;top:206.77px;font-size:9.6px;color:#0a0a0a;font-weight:bold;transform:scaleX(0.7456);transform-origin:0 0;-webkit-text-stroke:0;letter-spacing:0.4px;">LISBOA&gt; RIO DE JANEIRO (CONEXÃO ZURICH E FRANKFURT)</div>
<div id="t116" class="tx" style="left:36.0px;top:219.77px;font-size:9.6px;color:#0a0a0a;font-weight:bold;transform:scaleX(0.7182);transform-origin:0 0;-webkit-text-stroke:0;letter-spacing:0.4px;">BRUXELAS - BÉLGICA</div>
<div id="t117" class="tx" style="left:143.6px;top:219.77px;font-size:9.6px;color:#0a0a0a;font-weight:bold;transform:scaleX(0.7681);transform-origin:0 0;-webkit-text-stroke:0;letter-spacing:0.4px;">4 DIAS</div>
<div id="t118" class="tx" style="left:195.8px;top:219.77px;font-size:9.6px;color:#0a0a0a;font-weight:bold;transform:scaleX(0.7561);transform-origin:0 0;-webkit-text-stroke:0;letter-spacing:0.4px;">80 EUROS</div>
<div id="t119" class="tx" style="left:293.8px;top:219.77px;font-size:9.6px;color:#0a0a0a;font-weight:bold;transform:scaleX(0.7542);transform-origin:0 0;-webkit-text-stroke:0;letter-spacing:0.4px;">EXCURSÃO GHENT E BRUGES R$200,00</div>
<div id="t120" class="tx" style="left:524.7px;top:219.77px;font-size:9.6px;color:#0a0a0a;font-weight:bold;transform:scaleX(0.7541);transform-origin:0 0;-webkit-text-stroke:0;letter-spacing:0.4px;">25 EUROS</div>
<div id="t121" class="tx" style="left:628.7px;top:219.77px;font-size:9.6px;color:#0a0a0a;font-weight:bold;transform:scaleX(0.8334);transform-origin:0 0;-webkit-text-stroke:0;letter-spacing:0.4px;">R$ 300,00</div>
<div id="t122" class="tx" style="left:785.2px;top:219.77px;font-size:9.6px;color:#ff1a1a;font-weight:bold;transform:scaleX(0.7986);transform-origin:0 0;-webkit-text-stroke:0;letter-spacing:0.4px;">R$3,720,00 (VIAJA.NET)</div>
<div id="t123" class="tx" style="left:25.6px;top:231.77px;font-size:9.6px;color:#0a0a0a;font-weight:bold;transform:scaleX(0.7924);transform-origin:0 0;-webkit-text-stroke:0;letter-spacing:0.4px;">AMSTERDAM - HOLANDA</div>
<div id="t124" class="tx" style="left:143.6px;top:231.77px;font-size:9.6px;color:#0a0a0a;font-weight:bold;transform:scaleX(0.7681);transform-origin:0 0;-webkit-text-stroke:0;letter-spacing:0.4px;">5 DIAS</div>
<div id="t125" class="tx" style="left:193.2px;top:231.77px;font-size:9.6px;color:#0a0a0a;font-weight:bold;transform:scaleX(0.7679);transform-origin:0 0;-webkit-text-stroke:0;letter-spacing:0.4px;">100 EUROS</div>
<div id="t126" class="tx" style="left:524.7px;top:231.77px;font-size:9.6px;color:#0a0a0a;font-weight:bold;transform:scaleX(0.7541);transform-origin:0 0;-webkit-text-stroke:0;letter-spacing:0.4px;">25 EUROS</div>
<div id="t127" class="tx" style="left:628.7px;top:231.77px;font-size:9.6px;color:#0a0a0a;font-weight:bold;transform:scaleX(0.8334);transform-origin:0 0;-webkit-text-stroke:0;letter-spacing:0.4px;">R$ 400,00</div>
<div id="t128" class="tx" style="left:34.8px;top:244.77px;font-size:9.6px;color:#0a0a0a;font-weight:bold;transform:scaleX(0.7736);transform-origin:0 0;-webkit-text-stroke:0;letter-spacing:0.4px;">BERLIM - ALEMANHA</div>
<div id="t129" class="tx" style="left:143.6px;top:244.77px;font-size:9.6px;color:#0a0a0a;font-weight:bold;transform:scaleX(0.7681);transform-origin:0 0;-webkit-text-stroke:0;letter-spacing:0.4px;">5 DIAS</div>
<div id="t130" class="tx" style="left:193.2px;top:244.77px;font-size:9.6px;color:#0a0a0a;font-weight:bold;transform:scaleX(0.7679);transform-origin:0 0;-webkit-text-stroke:0;letter-spacing:0.4px;">100 EUROS</div>
<div id="t131" class="tx" style="left:524.7px;top:244.77px;font-size:9.6px;color:#0a0a0a;font-weight:bold;transform:scaleX(0.7541);transform-origin:0 0;-webkit-text-stroke:0;letter-spacing:0.4px;">25 EUROS</div>
<div id="t132" class="tx" style="left:628.7px;top:244.77px;font-size:9.6px;color:#0a0a0a;font-weight:bold;transform:scaleX(0.8334);transform-origin:0 0;-webkit-text-stroke:0;letter-spacing:0.4px;">R$ 300,00</div>
<div id="t133" class="tx" style="left:47.0px;top:256.77px;font-size:9.6px;color:#0a0a0a;font-weight:bold;transform:scaleX(0.7840);transform-origin:0 0;-webkit-text-stroke:0;letter-spacing:0.4px;">ROMA - ITÁLIA</div>
<div id="t134" class="tx" style="left:143.6px;top:256.77px;font-size:9.6px;color:#0a0a0a;font-weight:bold;transform:scaleX(0.7681);transform-origin:0 0;-webkit-text-stroke:0;letter-spacing:0.4px;">5 DIAS</div>
<div id="t135" class="tx" style="left:193.2px;top:256.77px;font-size:9.6px;color:#0a0a0a;font-weight:bold;transform:scaleX(0.7679);transform-origin:0 0;-webkit-text-stroke:0;letter-spacing:0.4px;">100 EUROS</div>
<div id="t136" class="tx" style="left:524.7px;top:256.77px;font-size:9.6px;color:#0a0a0a;font-weight:bold;transform:scaleX(0.7541);transform-origin:0 0;-webkit-text-stroke:0;letter-spacing:0.4px;">25 EUROS</div>
<div id="t137" class="tx" style="left:628.7px;top:256.77px;font-size:9.6px;color:#0a0a0a;font-weight:bold;transform:scaleX(0.8334);transform-origin:0 0;-webkit-text-stroke:0;letter-spacing:0.4px;">R$ 300,00</div>
<div id="t138" class="tx" style="left:28.9px;top:269.77px;font-size:9.6px;color:#0a0a0a;font-weight:bold;transform:scaleX(0.7618);transform-origin:0 0;-webkit-text-stroke:0;letter-spacing:0.4px;">BARCELONA - ESPANHA</div>
<div id="t139" class="tx" style="left:143.6px;top:269.77px;font-size:9.6px;color:#0a0a0a;font-weight:bold;transform:scaleX(0.7681);transform-origin:0 0;-webkit-text-stroke:0;letter-spacing:0.4px;">4 DIAS</div>
<div id="t140" class="tx" style="left:195.8px;top:269.77px;font-size:9.6px;color:#0a0a0a;font-weight:bold;transform:scaleX(0.7561);transform-origin:0 0;-webkit-text-stroke:0;letter-spacing:0.4px;">80 EUROS</div>
<div id="t141" class="tx" style="left:524.7px;top:269.77px;font-size:9.6px;color:#0a0a0a;font-weight:bold;transform:scaleX(0.7541);transform-origin:0 0;-webkit-text-stroke:0;letter-spacing:0.4px;">25 EUROS</div>
<div id="t142" class="tx" style="left:628.7px;top:269.77px;font-size:9.6px;color:#0a0a0a;font-weight:bold;transform:scaleX(0.8334);transform-origin:0 0;-webkit-text-stroke:0;letter-spacing:0.4px;">R$ 200,00</div>
<div id="t143" class="tx" style="left:36.7px;top:281.77px;font-size:9.6px;color:#0a0a0a;font-weight:bold;transform:scaleX(0.7511);transform-origin:0 0;-webkit-text-stroke:0;letter-spacing:0.4px;">LISBOA - PORTUGAL</div>
<div id="t144" class="tx" style="left:143.6px;top:281.77px;font-size:9.6px;color:#0a0a0a;font-weight:bold;transform:scaleX(0.7681);transform-origin:0 0;-webkit-text-stroke:0;letter-spacing:0.4px;">4 DIAS</div>
<div id="t145" class="tx" style="left:195.8px;top:281.77px;font-size:9.6px;color:#0a0a0a;font-weight:bold;transform:scaleX(0.7561);transform-origin:0 0;-webkit-text-stroke:0;letter-spacing:0.4px;">80 EUROS</div>
<div id="t146" class="tx" style="left:508.5px;top:281.77px;font-size:9.6px;color:#0a0a0a;font-weight:bold;transform:scaleX(0.7646);transform-origin:0 0;-webkit-text-stroke:0;letter-spacing:0.4px;">VOLTA AO BRASIL</div>
<div id="t147" class="tx" style="left:628.7px;top:281.77px;font-size:9.6px;color:#0a0a0a;font-weight:bold;transform:scaleX(0.8334);transform-origin:0 0;-webkit-text-stroke:0;letter-spacing:0.4px;">R$ 300,00</div>
<div id="t148" class="tx" style="left:61.7px;top:310.45px;font-size:10.8px;color:#ff1a1a;font-weight:bold;transform:scaleX(0.7652);transform-origin:0 0;-webkit-text-stroke:0;letter-spacing:0.4px;">TOTAL</div>
<div id="t149" class="tx" style="left:140.5px;top:310.87px;font-size:9.6px;color:#0a0a0a;font-weight:bold;transform:scaleX(0.7859);transform-origin:0 0;-webkit-text-stroke:0;letter-spacing:0.4px;">45 DIAS</div>
<div id="t150" class="tx" style="left:192.8px;top:310.87px;font-size:9.6px;color:#0a0a0a;font-weight:bold;transform:scaleX(0.7587);transform-origin:0 0;-webkit-text-stroke:0;letter-spacing:0.4px;">180 LIBRAS</div>
<div id="t151" class="tx" style="left:349.3px;top:310.87px;font-size:9.6px;color:#0a0a0a;font-weight:bold;transform:scaleX(0.8418);transform-origin:0 0;-webkit-text-stroke:0;letter-spacing:0.4px;">R$ 950,00</div>
<div id="t152" class="tx" style="left:500.0px;top:310.87px;font-size:9.6px;color:#0a0a0a;font-weight:bold;transform:scaleX(0.7836);transform-origin:0 0;-webkit-text-stroke:0;letter-spacing:0.4px;">225 EUROS (RYANAIR)</div>
<div id="t153" class="tx" style="left:624.5px;top:310.87px;font-size:9.6px;color:#0a0a0a;font-weight:bold;transform:scaleX(0.8326);transform-origin:0 0;-webkit-text-stroke:0;letter-spacing:0.4px;">R$ 3.050,00</div>
<div id="t154" class="tx" style="left:736.6px;top:309.51px;font-size:11.8px;color:#ff1a1a;font-weight:bold;transform:scaleX(0.9288);transform-origin:0 0;-webkit-text-stroke:0;letter-spacing:0.3px;">TOTAL FINAL (MÉDIA) R$12.000,00</div>
<div id="t155" class="tx" style="left:192.8px;top:323.97px;font-size:9.6px;color:#0a0a0a;font-weight:bold;transform:scaleX(0.7750);transform-origin:0 0;-webkit-text-stroke:0;letter-spacing:0.4px;">720 EUROS</div>
<div class="a" style="left:697px;top:359px;width:270px;height:15px;background:transparent;border:2px solid #217346"></div>
<div class="a" style="left:963px;top:369px;width:6px;height:6px;background:#fff;"></div>
<div class="a" style="left:964px;top:370px;width:4px;height:4px;background:#217346;"></div>
<div class="a" style="left:985px;top:145px;width:15px;height:352px;background:#e6e6e6;"></div>
<div class="a" style="left:987px;top:146px;width:11px;height:340px;background:#dadada;"></div>
<div class="a" style="left:987px;top:146px;width:11px;height:12px;background:#fff;border:1px solid #c6c6c6"></div>
<svg class="a" style="left:990px;top:150px;" width="6" height="4" viewBox="0 0 6 4"><path d="M0 3.5 L3 0.5 L6 3.5 Z" fill="#666"/></svg>
<div class="a" style="left:987px;top:158px;width:11px;height:316px;background:#fff;border:1px solid #c6c6c6"></div>
<div class="a" style="left:987px;top:486px;width:11px;height:11px;background:#fff;border:1px solid #c6c6c6"></div>
<svg class="a" style="left:990px;top:490px;" width="6" height="4" viewBox="0 0 6 4"><path d="M0 0.5 L3 3.5 L6 0.5 Z" fill="#666"/></svg>
<div class="a" style="left:0px;top:497px;width:1000px;height:20px;background:#e6e6e6;"></div>
<svg class="a" style="left:19px;top:503px;" width="4" height="6" viewBox="0 0 4 6"><path d="M3.5 0 V6 L0.5 3 Z" fill="#c0c0c0"/></svg>
<svg class="a" style="left:41px;top:503px;" width="4" height="6" viewBox="0 0 4 6"><path d="M0.5 0 V6 L3.5 3 Z" fill="#c0c0c0"/></svg>
<div class="a" style="left:73px;top:496px;width:59px;height:18px;background:#fff;"></div>
<div class="a" style="left:73px;top:496px;width:1px;height:18px;background:#c8c8c8;"></div>
<div class="a" style="left:132px;top:496px;width:1px;height:18px;background:#c8c8c8;"></div>
<div class="a" style="left:73px;top:513px;width:60px;height:2px;background:#217346;"></div>
<div id="t156" class="tx" style="left:82.4px;top:500.93px;font-size:10px;color:#217346;font-weight:bold;transform:scaleX(0.9315);transform-origin:0 0;">Planilha1</div>
<svg class="a" style="left:156px;top:500px;" width="13" height="13" viewBox="0 0 13 13"><circle cx="6.25" cy="6.25" r="5.6" fill="none" stroke="#777" stroke-width="1.1"/><path d="M6.25 3 V9.5 M3 6.25 H9.5" stroke="#777" stroke-width="1.2"/></svg>
<div class="a" style="left:600px;top:503px;width:1px;height:1.5px;background:#999;"></div>
<div class="a" style="left:600px;top:506px;width:1px;height:1.5px;background:#999;"></div>
<div class="a" style="left:600px;top:509px;width:1px;height:1.5px;background:#999;"></div>
<div class="a" style="left:612px;top:502px;width:11px;height:11px;background:#fff;border:1px solid #c6c6c6"></div>
<svg class="a" style="left:615px;top:505px;" width="4" height="6" viewBox="0 0 4 6"><path d="M3.5 0 V6 L0.5 3 Z" fill="#555"/></svg>
<div class="a" style="left:623px;top:502px;width:351px;height:11px;background:#dadada;"></div>
<div class="a" style="left:623px;top:502px;width:307px;height:11px;background:#fff;border:1px solid #c6c6c6"></div>
<div class="a" style="left:973px;top:502px;width:11px;height:11px;background:#fff;border:1px solid #c6c6c6"></div>
<svg class="a" style="left:977px;top:505px;" width="4" height="6" viewBox="0 0 4 6"><path d="M0.5 0 V6 L3.5 3 Z" fill="#555"/></svg>
<div class="a" style="left:0px;top:517px;width:1000px;height:16px;background:#f3f3f3;"></div>
<div id="t157" class="tx" style="left:6.3px;top:520.18px;font-size:9px;color:#555;font-weight:normal;transform:scaleX(0.9310);transform-origin:0 0;">Pronto</div>
<div class="a" style="left:786px;top:517px;width:28px;height:16px;background:#d4d4d4;"></div>
<svg class="a" style="left:795px;top:520px;" width="10" height="9" viewBox="0 0 10 9"><path d="M0.5 0.5 H9.5 V8.5 H0.5 Z M3.5 0.5 V8.5 M6.5 0.5 V8.5 M0.5 3.2 H9.5 M0.5 5.8 H9.5" fill="none" stroke="#666" stroke-width="0.9"/></svg>
<svg class="a" style="left:823px;top:520px;" width="10" height="9" viewBox="0 0 10 9"><rect x="0.5" y="0.5" width="9" height="8" fill="none" stroke="#666" stroke-width="0.9"/><rect x="3" y="2.5" width="4" height="4" fill="none" stroke="#666" stroke-width="0.9"/></svg>
<svg class="a" style="left:850px;top:520px;" width="11" height="9" viewBox="0 0 11 9"><path d="M0.5 0.5 V8.5 H10.5 V0.5 M6.5 0.5 V4.5 H0.5" fill="none" stroke="#666" stroke-width="0.9"/></svg>
<div class="a" style="left:873px;top:524px;width:4px;height:1.5px;background:#555;"></div>
<div class="a" style="left:881px;top:524px;width:73px;height:1px;background:#aaa;"></div>
<div class="a" style="left:917px;top:522px;width:1px;height:5px;background:#aaa;"></div>
<div class="a" style="left:904px;top:521px;width:3px;height:8px;background:#555;"></div>
<div class="a" style="left:957px;top:524px;width:6px;height:1.5px;background:#555;"></div>
<div class="a" style="left:959.3px;top:521.7px;width:1.5px;height:6px;background:#555;"></div>
<div id="t158" class="tx" style="left:974.7px;top:520.72px;font-size:8.6px;color:#555;font-weight:normal;transform:scaleX(0.8603);transform-origin:0 0;">68%</div></body></html>
